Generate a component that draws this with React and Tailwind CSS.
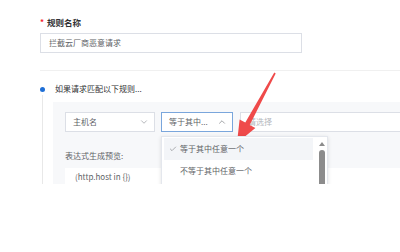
import React from 'react';
import { ChevronDown, ChevronUp, Check } from 'lucide-react';

const App = () => {
  return (
    <div className="relative w-[400px] h-[252px] bg-white overflow-hidden font-['Noto_Sans_CJK_SC','Noto_Sans',sans-serif]">
      <div className="h-[184px] overflow-hidden pl-[40px] pt-[16px]">
        {/* rule name */}
        <div className="flex items-center h-[12px] leading-[12px] text-[8.5px] font-bold text-[#303133]">
          <span className="text-[#f5222d] mr-[3px] text-[8px]">*</span>
          规则名称
        </div>
        <div className="mt-[5px] h-[20px] w-[262px] border border-[#dcdfe6] bg-white flex items-center pl-[8px] text-[8px] text-[#606266]">
          拦截云厂商恶意请求
        </div>
        <div className="mt-[17px] h-px bg-[#f0f0f0]" />

        {/* step */}
        <div className="mt-[11px] flex">
          <div className="w-[7px] flex flex-col items-center">
            <div className="mt-[5px] w-[5px] h-[5px] rounded-full bg-[#1f6fd6]" />
            <div className="mt-[3px] w-px flex-1 bg-[#e8e8e8]" />
          </div>
          <div className="ml-[8px]">
            <div className="pl-[2px] h-[14px] leading-[14px] text-[8px] text-[#303133]">
              如果请求匹配以下规则...
            </div>
            <div className="mt-[6px] w-[400px] bg-[#f7f8fa] pl-[12px] pt-[10px]">
              <div className="flex h-[20px] text-[8px]">
                <div className="w-[90px] bg-white border border-[#dcdfe6] flex items-center justify-between pl-[7px] pr-[5px] text-[#606266]">
                  <span>主机名</span>
                  <ChevronDown size={10} strokeWidth={1.5} className="text-[#8a8d93]" />
                </div>
                <div className="relative ml-[6px] w-[72px]">
                  <div className="h-full bg-white border border-[#7aa6dc] flex items-center justify-between pl-[7px] pr-[5px] text-[#606266]">
                    <span>等于其中...</span>
                    <ChevronUp size={10} strokeWidth={1.5} className="text-[#6b6e74]" />
                  </div>
                  <div className="absolute left-0 top-[24px] z-10 w-[167px] h-[80px] bg-white border border-[#e4e7ed] shadow-[0_1px_4px_rgba(0,0,0,0.12)] pt-[1px] pl-[2px]">
                    <div className="w-[149px] h-[22px] bg-[#f3f5f8] flex items-center pl-[5px] text-[#606266]">
                      <Check size={8} strokeWidth={1.5} className="text-[#606266]" />
                      <span className="ml-[3px]">等于其中任意一个</span>
                    </div>
                    <div className="w-[149px] h-[22px] flex items-center pl-[16px] text-[#606266]">
                      不等于其中任意一个
                    </div>
                    <div className="absolute left-[157px] top-[5px] w-0 h-0 border-l-[3px] border-r-[3px] border-b-[4px] border-l-transparent border-r-transparent border-b-[#8c8c8c]" />
                    <div className="absolute left-[157px] top-[13px] w-[6px] h-[60px] rounded-full bg-[#8c8c8c]" />
                  </div>
                </div>
                <div className="ml-[7px] flex-1 bg-white border border-[#dcdfe6] flex items-center pl-[7px] text-[#b4b7bd]">
                  请选择
                </div>
              </div>
              <div className="mt-[17px] h-[14px] leading-[14px] text-[8px] text-[#606266]">
                表达式生成预览:
              </div>
              <div className="mt-[5px] h-[30px] bg-white pl-[10px] pt-[2px] leading-[14px] text-[8px] text-[#606266]">
                {'(http.host in {})'}
              </div>
            </div>
          </div>
        </div>
      </div>

      {/* annotation arrow */}
      <svg className="absolute inset-0 pointer-events-none" width="400" height="252" viewBox="0 0 400 252">
        <polygon
          points="275.7,73.4 249.7,124.9 255.4,128 237,143 239.6,119.4 245.3,122.5 274.3,72.6"
          fill="#ef4a4a"
        />
      </svg>
    </div>
  );
};

export default App;
